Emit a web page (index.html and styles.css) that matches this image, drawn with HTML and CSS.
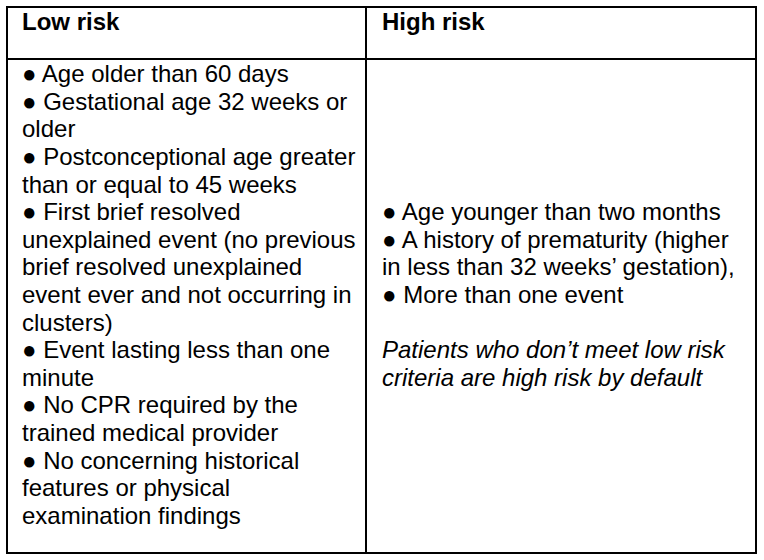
FILE: index.html
```html
<!DOCTYPE html>
<html lang="en">
<head>
<meta charset="utf-8">
<title>Risk criteria</title>
<link rel="stylesheet" href="styles.css">
</head>
<body>
<div class="risk-table">
  <div class="cell head left">Low risk</div>
  <div class="cell head right">High risk</div>
  <div class="cell body left">
    <span class="b">●</span> Age older than 60 days<br>
    <span class="b">●</span> Gestational age 32 weeks or<br>
    older<br>
    <span class="b">●</span> Postconceptional age greater<br>
    than or equal to 45 weeks<br>
    <span class="b">●</span> First brief resolved<br>
    unexplained event (no previous<br>
    brief resolved unexplained<br>
    event ever and not occurring in<br>
    clusters)<br>
    <span class="b">●</span> Event lasting less than one<br>
    minute<br>
    <span class="b">●</span> No CPR required by the<br>
    trained medical provider<br>
    <span class="b">●</span> No concerning historical<br>
    features or physical<br>
    examination findings
  </div>
  <div class="cell body right">
    <p class="list">
      <span class="b">●</span> Age younger than two months<br>
      <span class="b">●</span> A history of prematurity (higher<br>
      in less than 32 weeks’ gestation),<br>
      <span class="b">●</span> More than one event
    </p>
    <p class="note">Patients who don’t meet low risk<br>criteria are high risk by default</p>
  </div>
</div>
</body>
</html>
```

FILE: styles.css
```css
html, body {
  margin: 0;
  padding: 0;
  background: #ffffff;
}

body {
  padding: 6px;
  font-family: "Liberation Sans", Arial, Helvetica, sans-serif;
  font-size: 24px;
  line-height: 27.6px;
  color: #000000;
}

.risk-table {
  display: grid;
  grid-template-columns: 359px 388px;
  width: 751px;
  box-sizing: border-box;
  border: 2px solid #000000;
}

.cell {
  box-sizing: border-box;
  white-space: nowrap;
  padding: 0 10px 22.6px 14px;
}

.cell.right {
  padding-left: 15px;
}

.cell.left {
  border-right: 2px solid #000000;
}

.cell.head {
  font-weight: bold;
  border-bottom: 2px solid #000000;
}

.cell.body.right {
  display: flex;
  flex-direction: column;
  justify-content: center;
}

.list,
.note {
  margin: 0;
}

.note {
  margin-top: 27.6px;
  font-style: italic;
}

.b {
  font-family: "Liberation Sans", Arial, sans-serif;
}
```
